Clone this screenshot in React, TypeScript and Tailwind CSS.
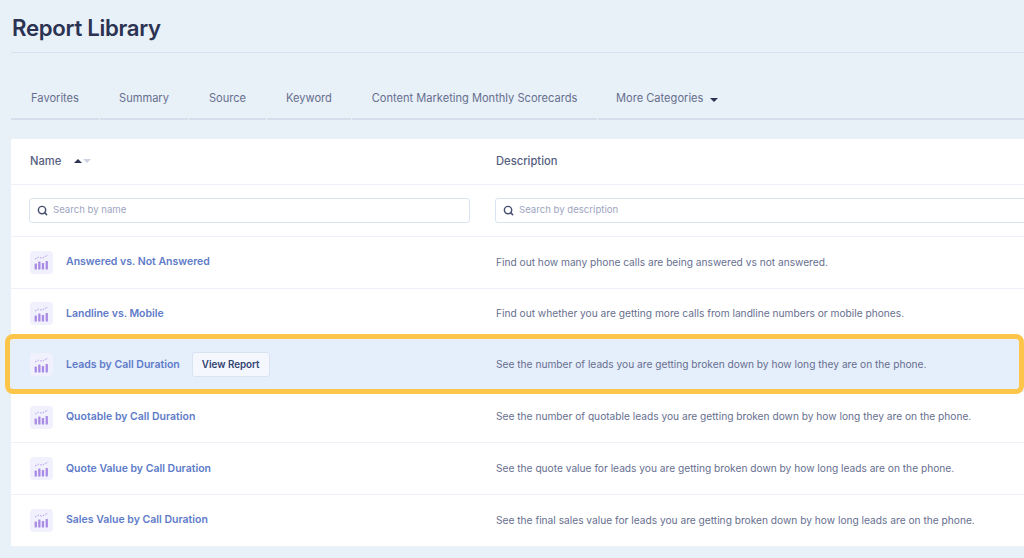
import React from 'react';
import { Search } from 'lucide-react';

const tabs = [
  { label: 'Favorites', width: 'w-[88px]' },
  { label: 'Summary', width: 'w-[88px]' },
  { label: 'Source', width: 'w-[77px]' },
  { label: 'Keyword', width: 'w-[84px]' },
  { label: 'Content Marketing Monthly Scorecards', width: 'w-[245px]' },
];

const reports = [
  { name: 'Answered vs. Not Answered', description: 'Find out how many phone calls are being answered vs not answered.' },
  { name: 'Landline vs. Mobile', description: 'Find out whether you are getting more calls from landline numbers or mobile phones.' },
  { name: 'Leads by Call Duration', description: 'See the number of leads you are getting broken down by how long they are on the phone.', active: true },
  { name: 'Quotable by Call Duration', description: 'See the number of quotable leads you are getting broken down by how long they are on the phone.' },
  { name: 'Quote Value by Call Duration', description: 'See the quote value for leads you are getting broken down by how long leads are on the phone.' },
  { name: 'Sales Value by Call Duration', description: 'See the final sales value for leads you are getting broken down by how long leads are on the phone.' },
];

function ReportIcon() {
  return (
    <div className="flex h-[23px] w-[23px] shrink-0 items-center justify-center rounded-sm bg-[#f0f1fd]">
      <svg width="15" height="16" viewBox="0 0 15 16" fill="none">
        <path d="M1 5 L4.5 3.2 L8 4.2 L14 1" stroke="#b79be8" strokeWidth="1" strokeDasharray="1.6 1.2" />
        <g fill="#a98ae4">
          <rect x="0.6" y="9.5" width="2.3" height="6" rx="0.6" />
          <rect x="4.2" y="7.5" width="2.3" height="8" rx="0.6" />
          <rect x="7.8" y="9" width="2.3" height="6.5" rx="0.6" />
          <rect x="11.6" y="7" width="2.3" height="8.5" rx="0.6" />
        </g>
      </svg>
    </div>
  );
}

function SearchBox({ placeholder, className }: { placeholder: string; className: string }) {
  return (
    <div className={`flex h-[25px] shrink-0 items-center gap-[5px] rounded-[3px] border border-[#d9e3f2] bg-white pl-[7px] ${className}`}>
      <Search size={11} strokeWidth={3.2} className="text-[#46506f]" />
      <span className="text-[9.6px] text-[#9ea5bf]">{placeholder}</span>
    </div>
  );
}

export default function App() {
  return (
    <div className="h-[558px] w-[1024px] overflow-hidden bg-[#e8f0f8] pl-[11px] font-['Inter',sans-serif]">
      <h1 className="flex h-[53px] items-center border-b border-[#d5e1ee] pl-px pt-[3px] text-[22.2px] font-semibold tracking-[-0.3px] text-[#2b3252]">
        Report Library
      </h1>

      {/* Tabs */}
      <div className="mt-[23px] flex h-[44px] gap-px">
        {tabs.map(t => (
          <div key={t.label} className={`${t.width} flex items-center justify-center border-b-2 border-[#d5dfeb] pt-[2px] text-[11.1px] text-[#666f8e]`}>
            {t.label}
          </div>
        ))}
        <div className="flex flex-1 items-center gap-[7px] border-b-2 border-[#d5dfeb] pl-[18px] pt-[2px] text-[11.1px] text-[#666f8e]">
          More Categories
          <span className="mt-[3px] h-0 w-0 border-x-[4px] border-t-[4px] border-x-transparent border-t-[#2b3252]" />
        </div>
      </div>

      {/* Table */}
      <div className="mt-[19px] bg-white">
        <div className="flex h-[46px] items-center border-b border-[#eef1f7] text-[11.2px] font-medium text-[#555e7e]">
          <div className="flex w-[485px] items-center pl-[19px]">
            Name
            <span className="ml-[13px] h-0 w-0 border-x-[4px] border-b-[4px] border-x-transparent border-b-[#2b3252]" />
            <span className="ml-px h-0 w-0 border-x-[4px] border-t-[4px] border-x-transparent border-t-[#ccd3e2]" />
          </div>
          <div>Description</div>
        </div>

        <div className="flex h-[52px] items-center border-b border-[#eef1f7] pl-[18px]">
          <SearchBox placeholder="Search by name" className="w-[441px]" />
          <SearchBox placeholder="Search by description" className="ml-[25px] w-[560px]" />
        </div>

        {reports.map(r => (
          <div key={r.name} className={`relative flex h-[51.6px] items-center border-b border-[#eef1f7] pl-[19px] ${r.active ? 'bg-[#e5eefb] pb-px' : ''}`}>
            <div className="flex w-[466px] items-center">
              <ReportIcon />
              <span className="ml-[13px] whitespace-nowrap text-[10.5px] font-semibold text-[#5e7bc8]">{r.name}</span>
              {r.active && (
                <span className="ml-[12px] flex h-[25px] w-[78px] items-center justify-center rounded-[3px] border border-[#d9e3f2] bg-[#f4f8fe] text-[9.8px] font-semibold text-[#2f4170]">
                  View Report
                </span>
              )}
            </div>
            <div className="whitespace-nowrap text-[10.18px] text-[#676f8f]">{r.description}</div>
            {r.active && (
              <div className="absolute bottom-[-3px] left-[-6px] right-0 top-[-6px] rounded-[8px] border-[5px] border-[#fec54b]" />
            )}
          </div>
        ))}
      </div>
    </div>
  );
}
